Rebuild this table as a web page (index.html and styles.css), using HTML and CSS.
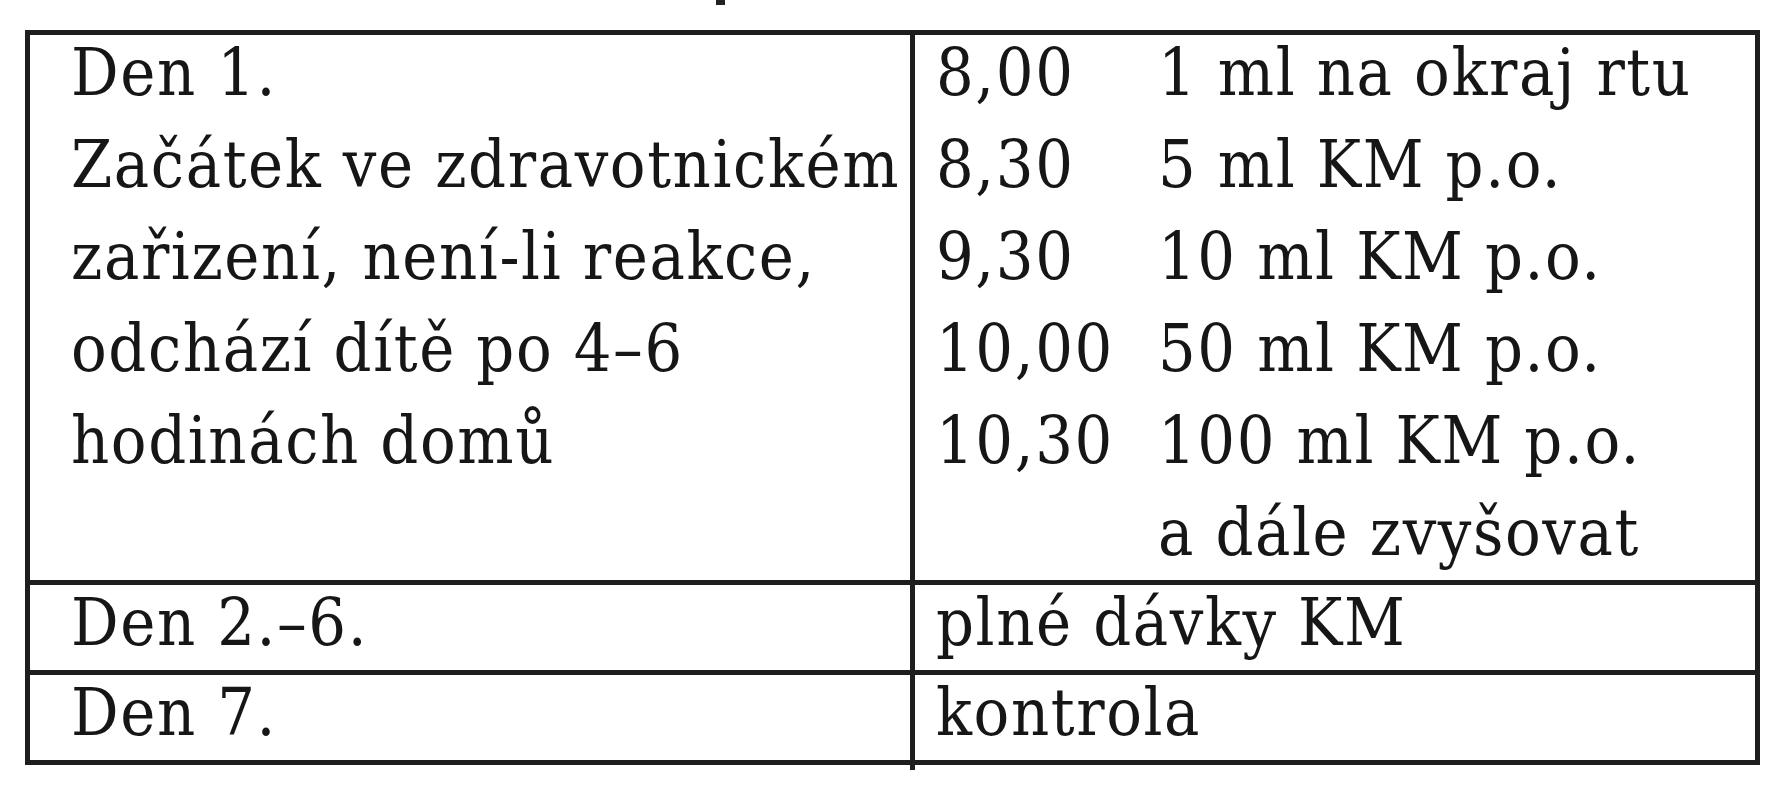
FILE: index.html
```html
<!DOCTYPE html>
<html lang="cs">
<head>
<meta charset="utf-8">
<title>Den 1.–7.</title>
<link rel="stylesheet" href="styles.css">
</head>
<body>
<div class="page">
  <span class="clip-mark" aria-hidden="true"></span>
  <div class="schedule">
    <div class="cell left">
      <div class="lines">
        <div>Den 1.</div>
        <div>Začátek ve zdravotnickém</div>
        <div>zařizení, není-li reakce,</div>
        <div>odchází dítě po 4–6</div>
        <div>hodinách domů</div>
      </div>
    </div>
    <div class="cell right">
      <div class="doses">
        <span>8,00</span><span>1 ml na okraj rtu</span>
        <span>8,30</span><span>5 ml KM p.o.</span>
        <span>9,30</span><span>10 ml KM p.o.</span>
        <span>10,00</span><span>50 ml KM p.o.</span>
        <span>10,30</span><span>100 ml KM p.o.</span>
        <span></span><span>a dále zvyšovat</span>
      </div>
    </div>
    <div class="cell left"><div class="lines"><div>Den 2.–6.</div></div></div>
    <div class="cell right"><div class="lines"><div>plné dávky KM</div></div></div>
    <div class="cell left"><div class="lines"><div>Den 7.</div></div></div>
    <div class="cell right"><div class="lines"><div>kontrola</div></div></div>
  </div>
</div>
</body>
</html>
```

FILE: styles.css
```css
html, body {
  margin: 0;
  padding: 0;
  background: #ffffff;
}

.page {
  position: relative;
  width: 1790px;
  height: 800px;
  padding: 30px 0 0 25px;
  box-sizing: border-box;
  font-family: "DejaVu Serif Condensed", "DejaVu Serif", serif;
  font-stretch: condensed;
  font-size: 66px;
  letter-spacing: 1.6px;
  color: #161616;
}

.clip-mark {
  position: absolute;
  left: 716px;
  top: 0;
  width: 9px;
  height: 5px;
  background: #222;
}

.schedule {
  position: relative;
  display: grid;
  grid-template-columns: 880px 840px;
  grid-template-rows: 545px 85px 85px;
  gap: 5px;
  width: max-content;
  background: #1e1e1e;
  border: 5px solid #1e1e1e;
}

.schedule::after {
  content: "";
  position: absolute;
  left: 880px;
  bottom: -10px;
  width: 5px;
  height: 5px;
  background: #1e1e1e;
}

.cell {
  background: #ffffff;
  padding-top: 0;
}

.cell.left {
  padding-left: 41px;
}

.cell.right {
  padding-left: 21px;
}

.lines,
.doses {
  display: grid;
  row-gap: 16px;
  line-height: 76px;
  white-space: nowrap;
}

.doses {
  grid-template-columns: 222px auto;
}
```
